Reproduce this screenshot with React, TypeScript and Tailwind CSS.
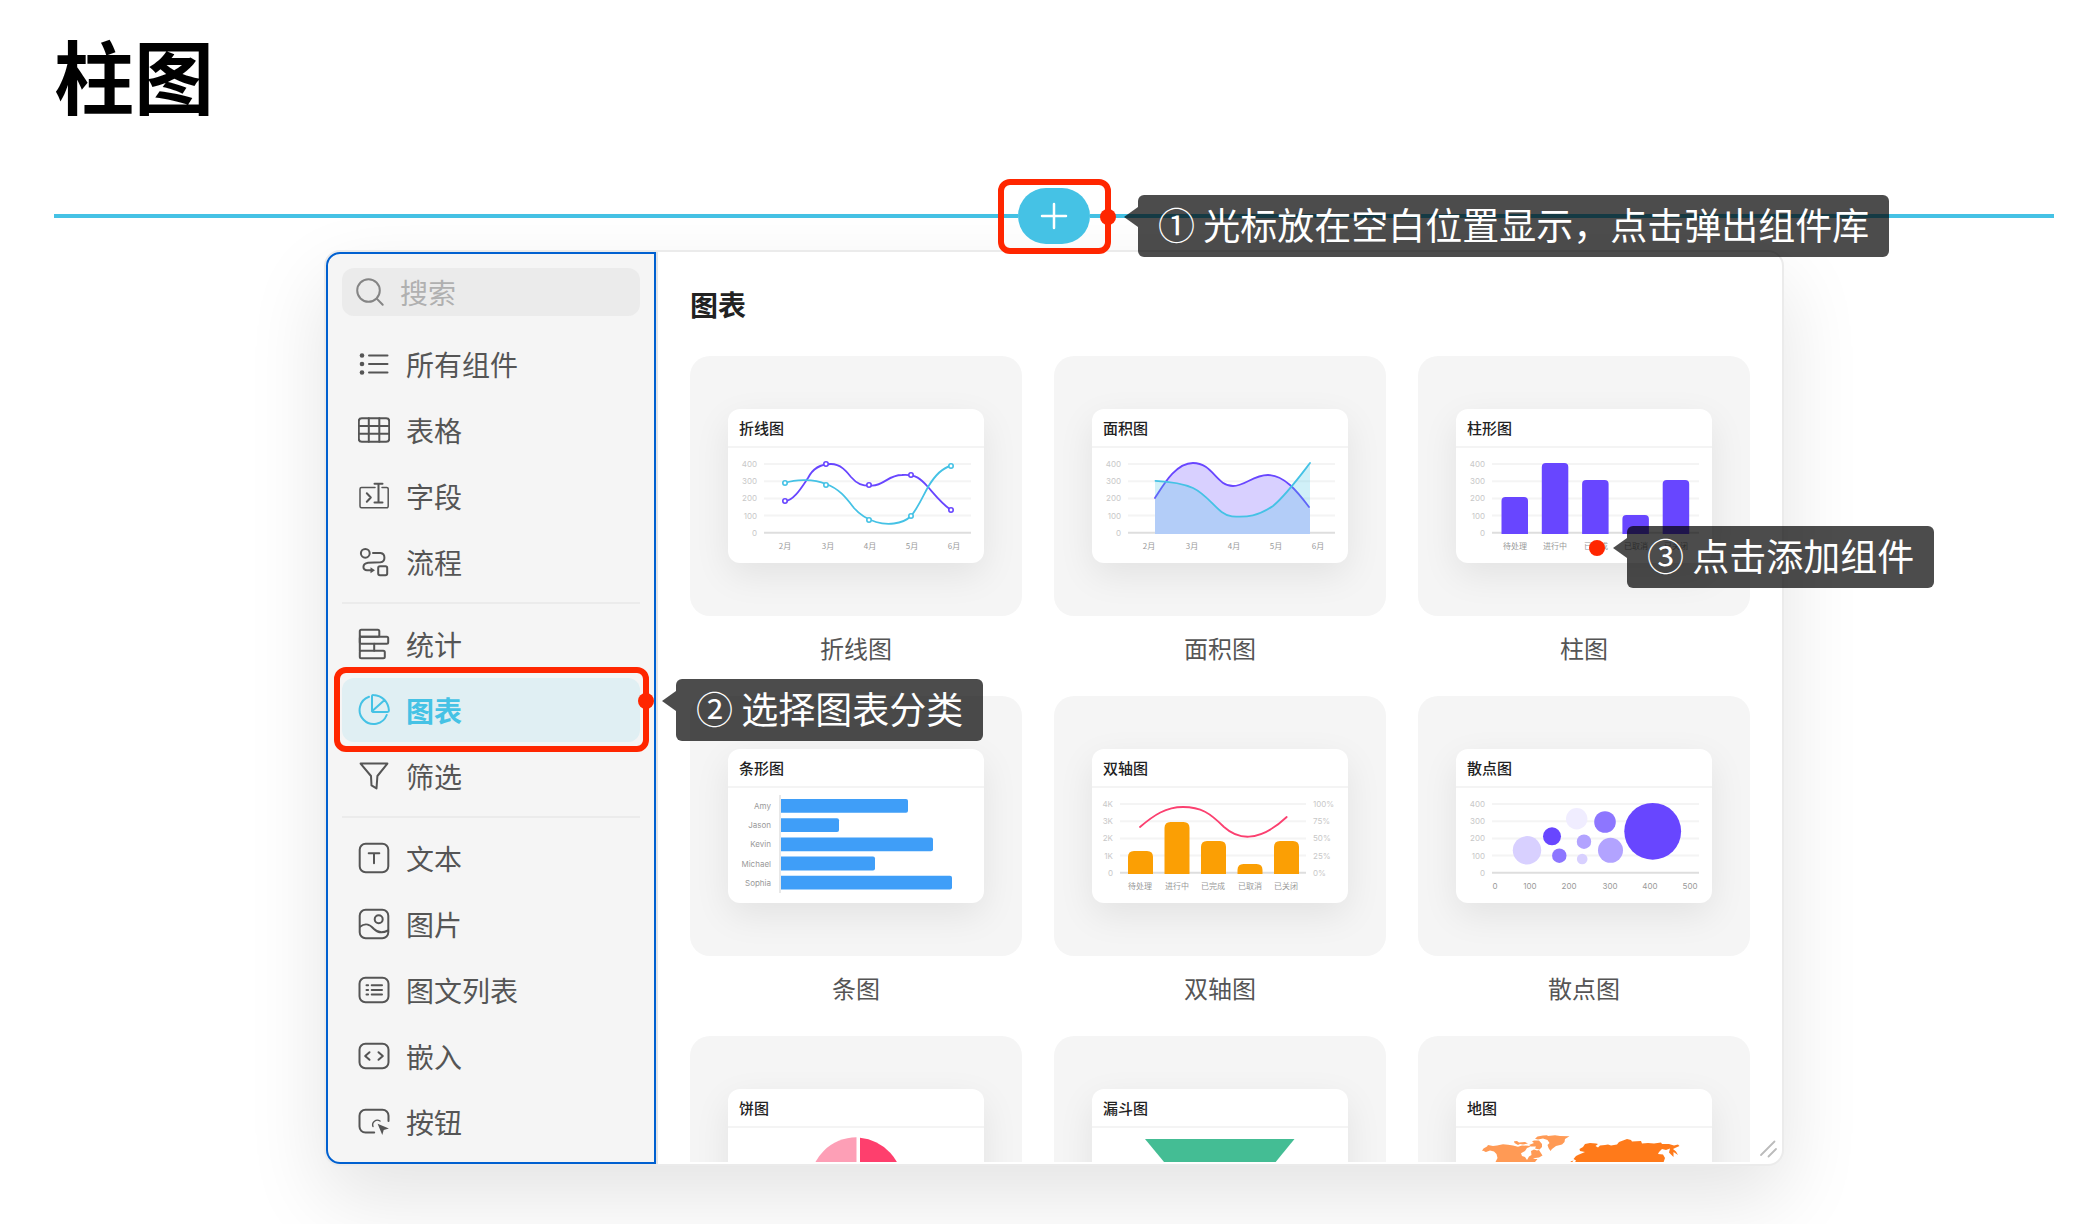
import type { ReactNode } from 'react';
import { clsx } from 'clsx';

interface NavItem {
  label: string;
  icon: ReactNode;
}

interface ChartItem {
  title: string;
  label?: string;
  chart: ReactNode;
}

const PURPLE = '#6846ff';
const CYAN = '#45c2e5';

const navGroups: NavItem[][] = [
  [
    {
      label: '所有组件',
      icon: (
        <>
          <path d="M11 7.5h18.5M11 16h18.5M11 24.5h18.5" />
          <g fill="currentColor" stroke="none">
            <circle cx="4" cy="7.5" r="2.3" />
            <circle cx="4" cy="16" r="2.3" />
            <circle cx="4" cy="24.5" r="2.3" />
          </g>
        </>
      ),
    },
    {
      label: '表格',
      icon: (
        <>
          <rect x="0.8" y="4.2" width="30.4" height="23.6" rx="3" />
          <path d="M10.8 4.2v23.6M21.3 4.2v23.6M0.8 12h30.4M0.8 19.8h30.4" />
        </>
      ),
    },
    {
      label: '字段',
      icon: (
        <>
          <path
            strokeWidth="1.5"
            d="M17 7.4H3.5a1.5 1.5 0 0 0-1.5 1.5v17.4a1.5 1.5 0 0 0 1.5 1.5h25.2a1.5 1.5 0 0 0 1.5-1.5V8.9a1.5 1.5 0 0 0-1.5-1.5H24"
          />
          <path d="M16.5 3.7h8M16.5 22.6h8M20.5 3.7v18.9M8.8 13.3l4 4.2-4 4.2" />
        </>
      ),
    },
    {
      label: '流程',
      icon: (
        <>
          <circle cx="7.3" cy="7.3" r="4.4" />
          <path d="M15 7.1h7.5a4.6 4.6 0 0 1 0 9.1L10 16.8c-6.3 1-5.500 7.5-1 7.5h4" />
          <path d="M12.5 21.3l4.5 3-4.5 3z" fill="currentColor" stroke="none" />
          <rect x="20.2" y="20.3" width="9" height="9" rx="1.8" />
        </>
      ),
    },
  ],
  [
    {
      label: '统计',
      icon: (
        <>
          <rect x="1.8" y="1.8" width="19.5" height="7" rx="1.5" />
          <rect x="1.8" y="8.8" width="28.4" height="7" rx="1.5" />
          <path d="M1.8 8v15M16.2 15.8v7" />
          <rect x="1.8" y="22.8" width="25" height="7.4" rx="1.5" />
        </>
      ),
    },
    {
      label: '图表',
      icon: (
        <>
          <path d="M11 2.8A14 14 0 1 0 28.7 21" />
          <path d="M14 17.3V2.2c0-.8.6-1.3 1.4-1.2 9 .6 15 7 15.5 15.5 0 .8-.5 1.4-1.3 1.4H14.6zL26.6 6" />
        </>
      ),
    },
    {
      label: '筛选',
      icon: <path d="M2.6 3.6h26.8L19.4 16l-.9 12.4-5-3L13 16z" />,
    },
  ],
  [
    {
      label: '文本',
      icon: (
        <>
          <rect x="1.7" y="1.7" width="28.6" height="28.6" rx="6" />
          <path d="M10.7 11.3h10.6M16 11.3v10" />
        </>
      ),
    },
    {
      label: '图片',
      icon: (
        <>
          <rect x="1.7" y="1.7" width="28.6" height="28.6" rx="6" />
          <circle cx="20.7" cy="11.3" r="4" />
          <path d="M2 18.8c5-4 9-3.3 14 2.2 4.5 4.6 9 4 14 1.500" />
        </>
      ),
    },
    {
      label: '图文列表',
      icon: (
        <>
          <rect x="1.5" y="3.7" width="29" height="24.6" rx="6" />
          <path d="M13.7 11.3H24M13.7 16H24M13.7 20.5H24M8.5 11.3h1.6M8.5 16h1.6M8.5 20.5h1.6" />
        </>
      ),
    },
    {
      label: '嵌入',
      icon: (
        <>
          <rect x="1.5" y="3.7" width="29" height="24.6" rx="6" />
          <path d="M11.5 12.2L7.2 16l4.3 3.8M20.5 12.2l4.3 3.8-4.3 3.8" />
        </>
      ),
    },
    {
      label: '按钮',
      icon: (
        <>
          <path d="M16.2 26.6H7.5a6 6 0 0 1-6-6V9.7a6 6 0 0 1 6-6h17a6 6 0 0 1 6 6V15" />
          <path d="M22 15a4.7 4.7 0 0 0-7 5.6" strokeWidth="1.4" />
          <path d="M19.6 17.7l11.3 4.7-5.2 1.5-1.4 5z" fill="currentColor" stroke="none" />
        </>
      ),
    },
  ],
];

function Icon({ children, className }: { children: ReactNode; className?: string }) {
  return (
    <svg
      viewBox="0 0 32 32"
      className={clsx('size-8 shrink-0', className)}
      fill="none"
      stroke="currentColor"
      strokeWidth="2"
      strokeLinecap="round"
      strokeLinejoin="round"
      aria-hidden="true"
    >
      {children}
    </svg>
  );
}

// Gridlines shared by every cartesian preview, 0 at the bottom.
function Axis({ labels, x1 = 36, x2 = 243 }: { labels: string[]; x1?: number; x2?: number }) {
  return (
    <g>
      {labels.map((label, i) => {
        const y = 16 + i * 17.2;
        const last = i === labels.length - 1;
        return (
          <g key={label}>
            <line x1={x1} x2={x2} y1={y} y2={y} stroke={last ? '#dedede' : '#f4f4f4'} strokeWidth="2" />
            <text x={x1 - 7} y={y + 3} textAnchor="end" className="fill-[#c8c8c8] font-['Inter',sans-serif] text-[8px]">
              {label}
            </text>
          </g>
        );
      })}
    </g>
  );
}

function XLabels({ labels, xs }: { labels: string[]; xs: number[] }) {
  return (
    <g className="fill-[#999999] text-[8px]">
      {labels.map((label, i) => (
        <text key={label} x={xs[i]} y={101} textAnchor="middle">
          {label}
        </text>
      ))}
    </g>
  );
}

const HUNDREDS = ['400', '300', '200', '100', '0'];
const MONTHS = ['2月', '3月', '4月', '5月', '6月'];
const MONTH_XS = [57, 100, 142, 184, 226];
const STATUSES = ['待处理', '进行中', '已完成', '已取消', '已关闭'];

function barPath(x: number, top: number, width: number, r: number) {
  return `M${x} 86V${top + r}q0 ${-r} ${r} ${-r}h${width - 2 * r}q${r} 0 ${r} ${r}V86z`;
}

function LineChart() {
  const purple = [[57, 53], [98, 16], [141, 37], [183, 27], [223, 62]];
  const cyan = [[57, 35], [98, 37], [141, 72], [183, 68], [223, 18]];
  return (
    <>
      <Axis labels={HUNDREDS} />
      <g fill="none" strokeWidth="1.8">
        <path
          stroke={PURPLE}
          d="M57 53C66 53 75 37 80 30C85 20 94 16 103 16C113 16 119 24 123 29C129 36 134 38 144 37.6C157 37 160 27 174 27C188 26 193 31 200 39C207 47 214 56 223 62"
        />
        <path
          stroke={CYAN}
          d="M57 35C68 31 86 31 98 36C112 41 119 51 126 60C132 67 138 71 148 74C158 77 174 77 183 68C190 60 195 48 200 39C206 29 213 20 223 18"
        />
      </g>
      <g fill="#fff" strokeWidth="1.6">
        {purple.map(([x, y]) => (
          <circle key={x} cx={x} cy={y} r="2.2" stroke={PURPLE} />
        ))}
        {cyan.map(([x, y]) => (
          <circle key={x} cx={x} cy={y} r="2.2" stroke={CYAN} />
        ))}
      </g>
      <XLabels labels={MONTHS} xs={MONTH_XS} />
    </>
  );
}

function AreaChart() {
  const purple = 'M63 50C72 36 84 15 101 15C121 15 124 38 141 38C153 38 161 27 176 27C192 27 205 43 217 59';
  const cyan = 'M63.5 32.8C78 33.5 90 35 101 40C118 48 126 67 140 68.3C156 69.5 166 68 181 58C194 47 205 32 218 15';
  return (
    <>
      <Axis labels={HUNDREDS} />
      <path d={`${purple}L218 61V86H63z`} fill="#d8d0ff" />
      <path d={purple} fill="none" stroke={PURPLE} strokeWidth="1.8" strokeLinecap="round" />
      <path d={`${cyan}V86H63V33z`} fill={CYAN} fillOpacity="0.25" />
      <path d={cyan} fill="none" stroke={CYAN} strokeWidth="1.8" strokeLinecap="round" />
      <XLabels labels={MONTHS} xs={MONTH_XS} />
    </>
  );
}

function ColumnChart() {
  const tops = [49, 15, 32, 67, 32];
  return (
    <>
      <Axis labels={HUNDREDS} />
      {tops.map((top, i) => (
        <path key={i} d={barPath(45.5 + i * 40.3, top, 26.5, 4)} fill={PURPLE} />
      ))}
      <XLabels labels={STATUSES} xs={[59, 99, 140, 180, 220]} />
    </>
  );
}

function BarChart() {
  const rows: [string, number][] = [
    ['Amy', 180],
    ['Jason', 111],
    ['Kevin', 205],
    ['Michael', 147],
    ['Sophia', 224],
  ];
  return (
    <>
      <line x1="52" x2="52" y1="7" y2="105" stroke="#e8e8e8" strokeWidth="2" />
      {rows.map(([name, end], i) => {
        const y = 11 + i * 19.2;
        return (
          <g key={name}>
            <text x="43" y={y + 10} textAnchor="end" className="fill-[#999999] font-['Inter',sans-serif] text-[8px]">
              {name}
            </text>
            <path d={`M53 ${y}H${end - 2}q2 0 2 2v9.8q0 2 -2 2H53z`} fill="#3f9ef8" />
          </g>
        );
      })}
    </>
  );
}

function DualAxisChart() {
  const tops = [63, 34, 53, 76, 53];
  return (
    <>
      <Axis labels={['4K', '3K', '2K', '1K', '0']} x1={28} x2={214} />
      {['100%', '75%', '50%', '25%', '0%'].map((label, i) => (
        <text key={label} x="221" y={19 + i * 17.2} className="fill-[#c8c8c8] font-['Inter',sans-serif] text-[8px]">
          {label}
        </text>
      ))}
      {tops.map((top, i) => (
        <path key={i} d={barPath(36 + i * 36.5, top, 25, 6)} fill="#fb9f04" />
      ))}
      <path
        d="M48 39C62 27 74 19 91 19C109 19 118 25 132 39C142 48 150 49 157 48.7C170 48 182 41 194.7 29"
        fill="none"
        stroke="#fb4070"
        strokeWidth="1.8"
        strokeLinecap="round"
      />
      <XLabels labels={STATUSES} xs={[48, 85, 121, 158, 194]} />
    </>
  );
}

function ScatterChart() {
  const bubbles: [number, number, number, string][] = [
    [71, 62.3, 14.2, '#d8d0ff'],
    [96, 48.3, 9, '#6846ff'],
    [103.3, 67.7, 7.2, '#8d76ff'],
    [120.7, 30.7, 10.7, '#f0edff'],
    [128, 53.7, 7.2, '#b2a3ff'],
    [126.2, 71, 5.3, '#d8d0ff'],
    [149, 34, 10.8, '#8d76ff'],
    [154.5, 62.3, 12.5, '#b2a3ff'],
    [196.7, 43.3, 28.4, '#6846ff'],
  ];
  return (
    <>
      <Axis labels={HUNDREDS} />
      {bubbles.map(([cx, cy, r, fill]) => (
        <circle key={cx} cx={cx} cy={cy} r={r} fill={fill} />
      ))}
      <g className="font-['Inter',sans-serif]">
        <XLabels labels={['0', '100', '200', '300', '400', '500']} xs={[39, 74, 113, 154, 194, 234]} />
      </g>
    </>
  );
}

function PieChart() {
  return (
    <>
      <path d="M128.5 9.3A46.5 46.5 0 0 0 128.5 102.3z" fill="#fd9fb6" />
      <path d="M132 9.8A46.5 46.5 0 0 1 174.5 56H132z" fill="#fe3f6d" />
    </>
  );
}

function FunnelChart() {
  return <path d="M53 11H202.5L155 69H101z" fill="#44bd94" />;
}

function MapChart() {
  return (
    <>
      <g fill="#ff9a55">
        <path d="M26 22.7L27.5 20.5L31 18.5L32 17L37 18L41 17.5L47 16.3L52 16.7L57 17.5L62 18.7L66 17.5L72 17.7L75 18.5L71 20L69 23L65 25.3L66 28L69 29L71 32L73 28.5L75.5 27L75 23L78 21.5L81 22.5L83 22L86.5 27.5L83 29.5L79 30L77 31L81.5 31L79 34L76 41L70 46L62 50L50 46L42 40L39.5 34L41.5 30L40.5 26L38 23.5L34 22.5L30 24L28 23.5L29 23z" />
        <path d="M58 13.3L61 13L63 14.5L69 14L72 15.5L67 16.5L64 16L62 17L58.5 15z" />
        <path d="M73 17L78 15L76 13.5L78 12.5L83 12.5L86 16L86 19L83.5 21.5L79 20.5L80 18.5L75 18.5z" />
        <path d="M79 10.7L81.5 8.5L87 7.5L91 7.3L92 8L99 7.3L104 8L113.5 8.3L109 11L108.5 14L106 16.5L100 18L96 21L94.5 23L92.5 20L91.5 17L93.5 15L91.5 12L87 10.5L82 11.5z" />
      </g>
      <g fill="#ff7a1a">
        <path d="M117.5 31L120 28L123 26.5L129 24L124 23L123.5 21L127 19L129 16L134 15L140 15.5L142 16L139.5 18L142 19.5L144 17.5L149 17L152 16.5L155 17.5L161 16.5L163 14L167 12.5L171 11L175 12L176 13.5L185 13L186 15.5L192 15L198 15.5L205 14.5L206 16L213 16L218 17.5L222 16.5L223.5 18L219 20L217 21L220 23.5L222 27L217.5 24L217.5 29L213 24.5L214 20.5L210 22L206 21L203 24L202 26L207 26.5L209 30L207 36L200 44L186 50L170 44L150 48L132 42L118 36L120 32.5z" />
        <path d="M114.5 33.5l3-1-2 2.5z" />
      </g>
    </>
  );
}

const charts: ChartItem[] = [
  { title: '折线图', label: '折线图', chart: <LineChart /> },
  { title: '面积图', label: '面积图', chart: <AreaChart /> },
  { title: '柱形图', label: '柱图', chart: <ColumnChart /> },
  { title: '条形图', label: '条图', chart: <BarChart /> },
  { title: '双轴图', label: '双轴图', chart: <DualAxisChart /> },
  { title: '散点图', label: '散点图', chart: <ScatterChart /> },
  { title: '饼图', chart: <PieChart /> },
  { title: '漏斗图', chart: <FunnelChart /> },
  { title: '地图', chart: <MapChart /> },
];

// Red dot with a dark bubble to its right; the caller positions the dot's centre.
function Callout({ children, className }: { children: ReactNode; className: string }) {
  return (
    <div className={clsx('pointer-events-none absolute z-10 size-0', className)}>
      <span className="absolute -left-2 -top-2 size-4 rounded-full bg-[#ff2600]" />
      <span className="absolute -top-[10px] left-4 h-5 w-[14px] bg-black/70 [clip-path:polygon(0_50%,100%_0,100%_100%)]" />
      <div className="absolute -top-[22px] left-[30px] whitespace-nowrap rounded-md bg-black/70 px-5 pb-1 text-[37px] leading-[58px] text-white">
        {children}
      </div>
    </div>
  );
}

function Sidebar() {
  return (
    <nav className="w-[330px] shrink-0 rounded-l-[14px] border-2 border-[#0060d0] bg-[#f5f5f5] px-[14px] pb-2 pt-[14px]">
      <label className="mb-4 flex h-12 items-center gap-[14px] rounded-xl bg-[#ebebeb] px-3">
        <Icon className="text-[#858585]">
          <circle cx="14.5" cy="14.5" r="11.3" />
          <path d="M22.7 22.6l6 6.1" />
        </Icon>
        <input
          type="search"
          placeholder="搜索"
          aria-label="搜索"
          className="min-w-0 flex-1 bg-transparent text-[28px] leading-10 outline-none placeholder:text-[#b0b0b0]"
        />
      </label>
      {navGroups.map((group, gi) => (
        <ul
          key={gi}
          className={clsx('flex flex-col gap-0.5', gi > 0 && 'mt-2 border-t-2 border-[#ebebeb] pt-2')}
        >
          {group.map((item) => {
            const active = item.label === '图表';
            return (
              <li key={item.label} className="relative">
                <button
                  type="button"
                  className={clsx(
                    'flex h-16 w-full items-center gap-4 rounded-xl px-4 text-left text-[28px]',
                    active ? 'bg-[#e0eff3] font-bold text-[#45c2e5]' : 'text-[#555555]',
                  )}
                >
                  <Icon>{item.icon}</Icon>
                  {item.label}
                </button>
                {active && (
                  <>
                    <span className="pointer-events-none absolute -bottom-[10px] -left-2 -right-[9px] -top-[11px] rounded-xl border-[6px] border-[#ff2600]" />
                    <Callout className="-right-[6px] top-[23px]">② 选择图表分类</Callout>
                  </>
                )}
              </li>
            );
          })}
        </ul>
      ))}
    </nav>
  );
}

function ChartCard({ item }: { item: ChartItem }) {
  return (
    <div className="relative">
      <button type="button" className="flex w-full flex-col items-center gap-4">
        <span className="flex h-[260px] w-full items-center justify-center rounded-[20px] bg-[#f5f5f5]">
          <span className="flex w-64 flex-col overflow-hidden rounded-xl bg-white shadow-[0_12px_36px_rgba(0,0,0,0.08)]">
            <span className="border-b-2 border-[#f4f4f4] px-[11px] text-left text-[15px] font-medium leading-[37px] text-[#222222]">
              {item.title}
            </span>
            <svg viewBox="0 0 256 115" className="block w-full" aria-hidden="true">
              {item.chart}
            </svg>
          </span>
        </span>
        {item.label && <span className="text-2xl leading-8 text-[#555555]">{item.label}</span>}
      </button>
      {item.label === '柱图' && <Callout className="left-[179px] top-48">③ 点击添加组件</Callout>}
    </div>
  );
}

export default function App() {
  return (
    <div className="min-h-screen overflow-hidden bg-white pb-[58px] pl-[54px] pr-11 pt-[33px] font-['Noto_Sans_CJK_SC',sans-serif]">
      <h1 className="text-[80px] font-bold leading-[80px] text-black">柱图</h1>

      <div className="mt-[75px] flex items-center">
        <span className="h-1 flex-1 bg-[#45c2e5]" />
        <div className="relative z-10">
          <button
            type="button"
            aria-label="添加组件"
            className="flex h-14 w-[72px] items-center justify-center rounded-full bg-[#45c2e5] text-white"
          >
            <svg viewBox="0 0 28 28" className="size-7" stroke="currentColor" strokeWidth="2.5" strokeLinecap="round">
              <path d="M14 2v24M2 14h24" />
            </svg>
          </button>
          <span className="pointer-events-none absolute -bottom-[10px] -left-5 -right-[21px] -top-[9px] rounded-xl border-[6px] border-[#ff2600]" />
          <Callout className="-right-[18px] top-[29px]">① 光标放在空白位置显示，点击弹出组件库</Callout>
        </div>
        <span className="h-1 flex-1 bg-[#45c2e5]" />
      </div>

      <div className="relative mx-auto mt-[6px] flex w-full max-w-[1460px] rounded-2xl border-2 border-[#ebebeb] bg-white shadow-[0_32px_80px_rgba(0,0,0,0.11)]">
        <Sidebar />
        <main className="min-w-0 flex-1 border-l-2 border-[#e4e4e4] pb-0.5">
          {/* height follows the sidebar; clipped only vertically so callouts can stick out */}
          <div className="h-0 min-h-full overflow-x-visible overflow-y-clip px-8 pt-8">
            <h2 className="mb-8 text-[28px] font-bold leading-10 text-[#222222]">图表</h2>
            <div className="grid grid-cols-3 gap-8">
              {charts.map((item) => (
                <ChartCard key={item.title} item={item} />
              ))}
            </div>
          </div>
        </main>
        <svg
          viewBox="0 0 20 20"
          className="absolute bottom-1 right-1 size-5"
          stroke="#bbbbbb"
          strokeWidth="1.8"
          strokeLinecap="round"
          aria-hidden="true"
        >
          <path d="M3 15L16.5 1.5M10.5 16.5L18 9" />
        </svg>
      </div>
    </div>
  );
}
